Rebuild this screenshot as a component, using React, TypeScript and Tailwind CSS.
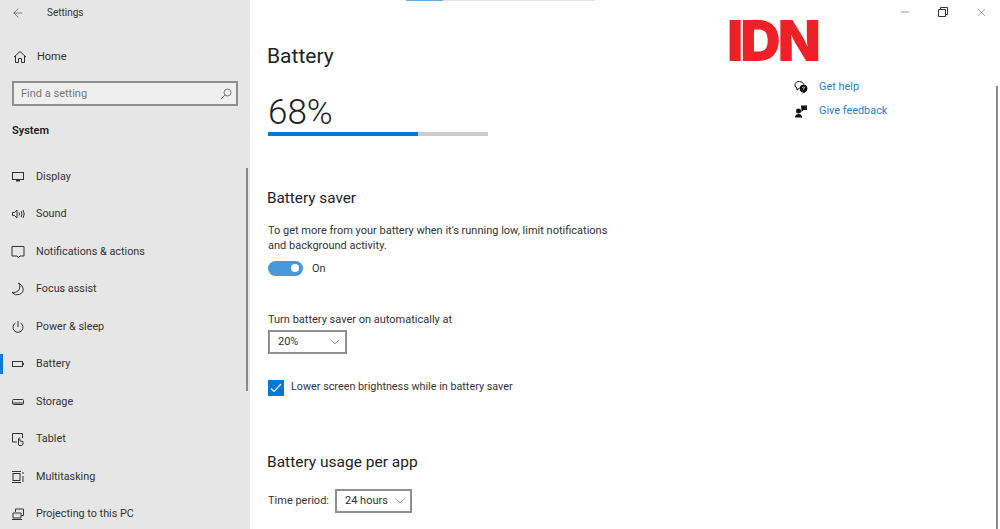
import { ArrowLeft, ChevronDown, Minus, X } from "lucide-react";
import type { ReactNode } from "react";

type NavItem = {
  label: string;
  icon: ReactNode;
  active?: boolean;
};

const iconProps = {
  width: 14,
  height: 14,
  viewBox: "0 0 14 14",
  fill: "none",
  stroke: "#333",
  strokeWidth: 1,
};

const navItems: NavItem[] = [
  {
    label: "Display",
    icon: (
      <svg {...iconProps}>
        <rect x="1.500" y="2.500" width="11" height="7" />
        <path d="M5 10.500h4" strokeWidth="2" />
      </svg>
    ),
  },
  {
    label: "Sound",
    icon: (
      <svg {...iconProps}>
        <path d="M1.500 5.500v3h2l2.500 2.500v-8L3.500 5.500z" />
        <path d="M8 5.500q1 1.500 0 3M10 4q2 3 0 6M12 3q2.500 4 0 8" />
      </svg>
    ),
  },
  {
    label: "Notifications & actions",
    icon: (
      <svg {...iconProps}>
        <path d="M1 1.500h12v9.500H9l-1.500 1.500L6 11H1z" />
      </svg>
    ),
  },
  {
    label: "Focus assist",
    icon: (
      <svg {...iconProps}>
        <path d="M7.500 1q3 4 -.5 8q-2.500 2 -6 1.500q3 3.500 7.500 2q4.500 -2 3.500 -6.500q-1 -3.500 -4.500 -5z" />
      </svg>
    ),
  },
  {
    label: "Power & sleep",
    icon: (
      <svg {...iconProps}>
        <path d="M7 1v6" />
        <path d="M4.500 3a5 5 0 1 0 5 0" />
      </svg>
    ),
  },
  {
    label: "Battery",
    active: true,
    icon: (
      <svg {...iconProps}>
        <rect x="1.500" y="4.500" width="10" height="5" />
        <path d="M12.500 6v2" />
      </svg>
    ),
  },
  {
    label: "Storage",
    icon: (
      <svg {...iconProps}>
        <rect x="1.500" y="4.500" width="11" height="5" rx="1" />
        <path d="M2 8h10" />
      </svg>
    ),
  },
  {
    label: "Tablet",
    icon: (
      <svg {...iconProps}>
        <path d="M6 10H1.500V1.500h10V6" />
        <path d="M7.500 13V6.500q1 -1 1.500 0V9l3 .5V12l-1 1.500H8z" />
      </svg>
    ),
  },
  {
    label: "Multitasking",
    icon: (
      <svg {...iconProps}>
        <rect x="2" y="3.500" width="7" height="7" />
        <path d="M1 1.500h9M1 12.500h9M12 2v2M12 6v6" />
      </svg>
    ),
  },
  {
    label: "Projecting to this PC",
    icon: (
      <svg {...iconProps}>
        <path d="M4.500 5V2h8v6.500H10" />
        <path d="M2 6h8v5H2zM1 12.500h10" />
      </svg>
    ),
  },
];

function Dropdown({ value, width }: { value: string; width: string }) {
  return (
    <div
      className={`flex h-6 items-center justify-between border-2 border-[#8f8f8f] bg-white pl-2 pr-[2px] text-[11px] whitespace-nowrap text-[#333] ${width}`}
    >
      <span className="pt-[2px]">{value}</span>
      <ChevronDown size={16} strokeWidth={0.9} color="#555" />
    </div>
  );
}

export default function App() {
  return (
    <div
      className="relative flex h-[529px] w-[1000px] overflow-hidden bg-white text-[#222]"
      style={{ fontFamily: 'Roboto, "Noto Sans", sans-serif' }}
    >
      {/* left settings menu */}
      <aside className="relative flex h-[529px] w-[250px] shrink-0 flex-col overflow-hidden bg-[#e6e6e6]">
        <div className="flex h-[25px] shrink-0 items-center pl-[11px]">
          <ArrowLeft size={14} strokeWidth={1} color="#333" />
          <span className="ml-[22px] text-[10px] text-[#333]">Settings</span>
        </div>
        <div className="mt-[14px] flex h-9 shrink-0 items-center pl-[13px]">
          <svg {...iconProps}>
            <path d="M1 7l6 -5.500L13 7M2.500 6v6.500h3V8.500h3v4h3V6" />
          </svg>
          <span className="ml-[10px] text-[11px] text-[#333]">Home</span>
        </div>
        <div className="mx-3 mt-[6px] flex h-[25px] shrink-0 items-center justify-between border-2 border-[#8f8f8f] bg-[#efefef] pl-[7px] pr-[3px] text-[11px] text-[#777]">
          <span className="pt-[2px]">Find a setting</span>
          <svg {...iconProps} stroke="#777">
            <circle cx="8.500" cy="5.500" r="3.500" />
            <path d="M6 8l-4 4" />
          </svg>
        </div>
        <div className="mt-[17px] shrink-0 pl-3 text-[11px] leading-4 font-semibold text-[#222]">
          System
        </div>
        <nav className="mt-[19px] flex shrink-0 flex-col">
          {navItems.map((item) => (
            <div key={item.label} className="relative flex h-[37.500px] shrink-0 items-center pl-[11px]">
              {item.active && (
                <div className="absolute top-[8px] left-0 h-[20px] w-[3px] bg-[#0078d7]" />
              )}
              {item.icon}
              <span className="ml-[11px] text-[10.800px] text-[#333]">{item.label}</span>
            </div>
          ))}
        </nav>
        <div className="absolute top-[168px] right-[2px] h-[223px] w-[2px] bg-[#8a8a8a]" />
      </aside>

      {/* main content */}
      <main className="flex min-w-0 flex-1">
        <div className="w-[500px] shrink-0 pl-[17px]">
          <h1 className="mt-[40px] text-[21px] leading-8 font-normal text-[#222]">Battery</h1>
          <div className="mt-[21px] pl-px text-[35px] leading-[40px] font-light text-[#222]">68%</div>
          <div className="mt-[-1px] ml-px flex h-1 w-[220px] bg-[#cccccc]">
            <div className="w-[150px] bg-[#0078d7]" />
          </div>
          <h2 className="mt-[50px] text-[15.300px] leading-6 font-normal text-[#222]">Battery saver</h2>
          <p className="mt-[13px] ml-px w-[360px] text-[11px] leading-[15px] text-[#333]">
            To get more from your battery when it's running low, limit notifications and background activity.
          </p>
          <div className="mt-[6px] ml-px flex items-center">
            <div className="flex h-[15px] w-[35px] items-center justify-end rounded-full bg-[#4a98dc] pr-[4px]">
              <div className="h-[8px] w-[8px] rounded-full bg-white" />
            </div>
            <span className="ml-[9px] pt-[2px] text-[11px] text-[#333]">On</span>
          </div>
          <div className="mt-[34px] ml-px text-[11px] leading-4 text-[#333]">
            Turn battery saver on automatically at
          </div>
          <div className="mt-[2px] ml-px">
            <Dropdown value="20%" width="w-[79px]" />
          </div>
          <div className="mt-[25px] ml-px flex items-center">
            <div className="flex h-4 w-4 items-center justify-center bg-[#0078d7]">
              <svg width="12" height="12" viewBox="0 0 12 12" fill="none" stroke="#fff" strokeWidth="1.200">
                <path d="M1 6.500l3 3L11 2" />
              </svg>
            </div>
            <span className="ml-[7px] pb-[2px] text-[10.800px] text-[#333]">Lower screen brightness while in battery saver</span>
          </div>
          <h2 className="mt-[53px] text-[15.500px] leading-6 font-normal text-[#222]">Battery usage per app</h2>
          <div className="mt-[15px] ml-px flex items-center">
            <span className="mr-[6px] pt-[2px] text-[11px] text-[#333]">Time period:</span>
            <Dropdown value="24 hours" width="w-[77px]" />
          </div>
        </div>

        {/* right links */}
        <div className="flex flex-1 flex-col">
          <div className="flex h-6 items-center justify-end gap-[26px] pr-[12px]">
            <Minus size={12} strokeWidth={1} color="#333" />
            <svg width="12" height="12" viewBox="0 0 12 12" fill="none" stroke="#333" strokeWidth="1">
              <path d="M1.500 3.500h7v7h-7zM3.500 3.500v-2h7v7h-2" />
            </svg>
            <X size={13} strokeWidth={0.8} color="#333" />
          </div>
          <div className="mt-[-6px] ml-[-23px] text-[56px] leading-[46px] font-black tracking-[-3px] text-[#ee2028]" style={{ fontFamily: "Inter, sans-serif" }}>
            IDN
          </div>
          <div className="mt-[11px] ml-[44px] flex flex-col text-[10.900px] text-[#1f7fcf]">
            <div className="flex h-6 items-center">
              <svg width="14" height="14" viewBox="0 0 14 14" fill="none" stroke="#111" strokeWidth="1">
                <path d="M5.500 1.500q-4.500 0 -4.500 3.500q0 2.500 2 3v2l2.500 -2" />
                <path d="M5.500 1.500q3.500 0 4.500 3" />
                <circle cx="9.500" cy="8.500" r="3.500" fill="#111" />
                <path d="M8.500 13l2.500 -1" />
                <path d="M8.300 7.500q1.200 -1.200 2.300 0q0 .8 -1.100 1.300v.6" stroke="#fff" strokeWidth="0.800" />
              </svg>
              <span className="ml-[11px]">Get help</span>
            </div>
            <div className="flex h-6 items-center">
              <svg width="14" height="14" viewBox="0 0 14 14" fill="#111">
                <circle cx="4.500" cy="7" r="2.500" />
                <path d="M1 13.500q0 -3.500 3.500 -3.500q3.500 0 3.500 3.500z" />
                <path d="M7 1.500h6v4.500H9.500L7.500 8z" />
              </svg>
              <span className="ml-[11px]">Give feedback</span>
            </div>
          </div>
        </div>
      </main>

      {/* bits lying over the page: top strip and scrollbar */}
      <div className="absolute top-0 left-[406px] flex h-px w-[189px] bg-[#e2e2e2]">
        <div className="w-[37px] bg-[#6aa9dc]" />
      </div>
      <div className="absolute top-[86px] right-[2px] h-[443px] w-[2px] bg-[#8a8a8a]" />
    </div>
  );
}
